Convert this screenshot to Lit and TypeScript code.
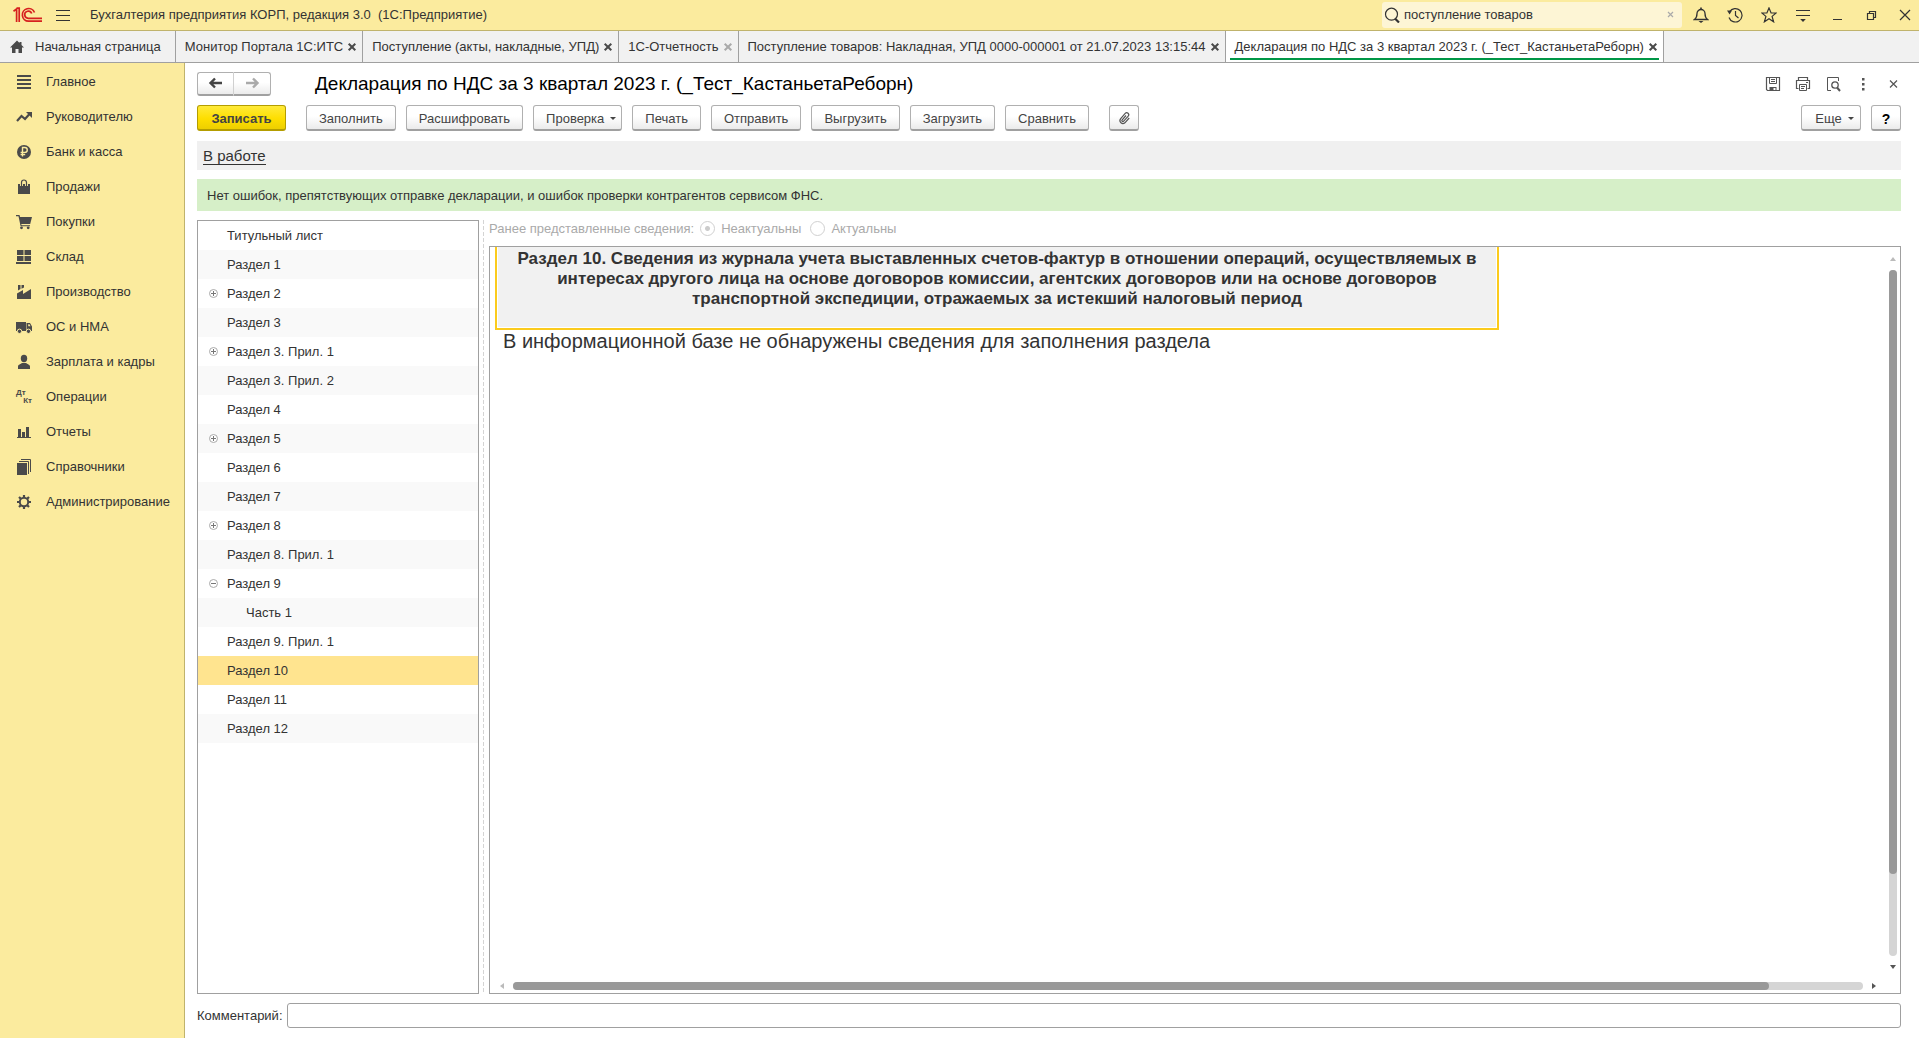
import { LitElement, html, css, svg } from "lit";
import { customElement, property } from "lit/decorators.js";
import { classMap } from "lit/directives/class-map.js";

const shapes: Record<string, unknown> = {
  main: svg`<path d="M1 2h14M1 6h14M1 10h14M1 14h14" fill="none" stroke="currentColor" stroke-width="2"/>`,
  manager: svg`<path d="M1 12 5.500 7 9 10 13.500 5" fill="none" stroke="currentColor" stroke-width="2.2"/><path d="M10 3h6v6z" fill="currentColor"/>`,
  bank: svg`<circle cx="8" cy="8" r="7" fill="currentColor"/><path d="M6.500 12.500v-9h2.300a2.400 2.400 0 0 1 0 4.900H4.600M4.600 10.500h4.600" fill="none" stroke="#fbeb9e" stroke-width="1.4"/>`,
  sales: svg`<path d="M2 5h12v10H2z" fill="currentColor"/><path d="M5.500 7V3.500a2.500 2.500 0 0 1 5 0V7" fill="none" stroke="#fbeb9e" stroke-width="3"/><path d="M5.500 7V3.500a2.500 2.500 0 0 1 5 0V7" fill="none" stroke="currentColor" stroke-width="1.2"/>`,
  purchases: svg`<path d="M0 1h3.500l.6 2H16l-1.800 7H5.200l.4 1.200H14v1H4.600L2.500 2.300H0z" fill="currentColor"/><circle cx="5.5" cy="13.8" r="1.4" fill="currentColor"/><circle cx="12.2" cy="13.8" r="1.4" fill="currentColor"/>`,
  stock: svg`<path d="M1 1h6.500v5H1zM8.500 1H15v5H8.500zM1 7h6.500v5H1zM8.500 7H15v5H8.500zM0 13h15v2H0z" fill="currentColor"/>`,
  production: svg`<path d="M1 15V9.500L7 6v4l8-5v10zM2 1h2.500v4L2 6.500zM5.500 1H8v2.500L5.500 4.800z" fill="currentColor"/>`,
  assets: svg`<path d="M0 3h10v9H0zM10.500 4H14l2 3.500V12h-5.500z" fill="currentColor"/><path d="M12.200 5.300h1.300l1 2h-2.300z" fill="#fbeb9e"/><circle cx="3.5" cy="12.3" r="2.2" fill="currentColor" stroke="#fbeb9e"/><circle cx="12.5" cy="12.3" r="2.2" fill="currentColor" stroke="#fbeb9e"/>`,
  salary: svg`<ellipse cx="8" cy="4.5" rx="3.2" ry="3.7" fill="currentColor"/><path d="M2 15v-2.500C2 10.500 5 10 6 9h4c1 1 4 1.500 4 3.500V15z" fill="currentColor"/>`,
  reports: svg`<path d="M1 13h14v1H1zM2 5h3v8H2zM6 8h3v5H6zM10 3h3v10h-3z" fill="currentColor"/>`,
  catalogs: svg`<path d="M1 4h10v12H1z" fill="currentColor"/><path d="M3 2.500h9.500V15M5 .5h9.500V13" fill="none" stroke="currentColor"/>`,
  admin: svg`<circle cx="8" cy="8" r="4.2" fill="none" stroke="currentColor" stroke-width="2"/><path d="M8 1v2.500M8 12.500V15M1 8h2.500M12.500 8H15M3 3l1.800 1.800M11.200 11.200 13 13M13 3l-1.800 1.800M4.800 11.200 3 13" stroke="currentColor" stroke-width="2.2"/>`,
  home: svg`<path d="M8 1.500 1 8.500h2V14h3.500v-4h3v4H13V8.500h2L12.500 6V3h-2v1z" fill="currentColor"/>`,
  burger: svg`<path d="M1 3.500h14M1 8.500h14M1 13.500h14" fill="none" stroke="currentColor"/>`,
  search: svg`<circle cx="7.5" cy="7.2" r="6" fill="none" stroke="currentColor" stroke-width="1.2"/><path d="M11 11.500 15 15.500" stroke="currentColor" stroke-width="2.2"/>`,
  bell: svg`<path d="M1.500 12.500c2-1.500 2.500-3 2.500-6A4 4 0 0 1 8 2.500a4 4 0 0 1 4 4c0 3 .5 4.500 2.500 6z" fill="none" stroke="currentColor" stroke-width="1.3"/><path d="M8 .5v2" stroke="currentColor" stroke-width="1.6"/><path d="M5.500 14h5L8 16z" fill="currentColor"/>`,
  history: svg`<path d="M2.600 4.800A6.700 6.700 0 1 1 2 10.500" fill="none" stroke="currentColor" stroke-width="1.2"/><path d="M0 3.500h5L2.600 7.500z" fill="currentColor"/><path d="M8.500 4v4.500l3 2.500" fill="none" stroke="currentColor" stroke-width="1.2"/>`,
  star: svg`<path d="M8 .9 10.100 6h5.100l-4.100 3.400 1.500 5.400L8 11.700l-4.600 3.100 1.500-5.400L.8 6h5.100z" fill="none" stroke="currentColor" stroke-width="1.2"/>`,
  service: svg`<path d="M1 3.500h14M1 8.500h14" stroke="currentColor"/><path d="M5.200 12h5.600L8 15z" fill="currentColor"/>`,
  minimize: svg`<path d="M4 12.500h9" stroke="currentColor"/>`,
  restore: svg`<path d="M4.500 6.500h6v6h-6zM6.500 6.500v-2h6v6h-2" fill="none" stroke="currentColor" stroke-width="1.2"/>`,
  close: svg`<path d="M3 3l10 10M13 3 3 13" stroke="currentColor" stroke-width="1.2"/>`,
  closeSmall: svg`<path d="M5 4.500l7 7M12 4.500l-7 7" stroke="currentColor" stroke-width="1.2"/>`,
  closeTiny: svg`<path d="M6 5l5 5M11 5l-5 5" stroke="currentColor" stroke-width="1.2"/>`,
  closeTab: svg`<path d="M4.700 4.700l6.600 6.600M11.300 4.700l-6.600 6.600" stroke="currentColor" stroke-width="2"/>`,
  save: svg`<path d="M1.500 1.500h13v13h-12l-1-1z" fill="none" stroke="currentColor" stroke-width="1.2"/><path d="M4.500 1.500v6h7v-6M6 3.500h4M6 5.500h4" fill="none" stroke="currentColor"/><path d="M4.500 15v-4h7v4h-1v-3h-2v3z" fill="currentColor"/>`,
  print: svg`<path d="M3.500 4.500v-3h9v3M3.500 12.500h-2v-8h13v8h-2" fill="none" stroke="currentColor" stroke-width="1.2"/><path d="M4.500 8.500h7v6h-7zM6 10.500h4M6 12.500h3" fill="none" stroke="currentColor"/><path d="M11 6.500h2" stroke="currentColor"/>`,
  preview: svg`<path d="M6 14.500H2.500v-13h11V5" fill="none" stroke="currentColor"/><circle cx="10" cy="9" r="3.2" fill="none" stroke="currentColor" stroke-width="1.3"/><path d="M12 11.500l3 3.500" stroke="currentColor" stroke-width="2"/>`,
  dots: svg`<path d="M7 2h2.500v2.500H7zM7 7h2.500v2.500H7zM7 12h2.500v2.500H7z" fill="currentColor"/>`,
  back: svg`<path d="M7 3.500 2.500 8 7 12.500M3 8h11" fill="none" stroke="currentColor" stroke-width="2.4"/>`,
  forward: svg`<path d="M9 3.500 13.500 8 9 12.500M13 8H2" fill="none" stroke="currentColor" stroke-width="2.4"/>`,
  clip: svg`<path d="M10 5.500 6 10a1 1 0 0 0 1.500 1.300l4.700-5.200a2 2 0 0 0-3-2.700L4.500 8.800a3 3 0 0 0 4.400 4l4.300-4.800" fill="none" stroke="currentColor" stroke-width="1.2"/>`,
  plus: svg`<circle cx="8.5" cy="7.5" r="4" fill="#fff" stroke="#aaa"/><path d="M6 7.500h5M8.500 5v5" stroke="#777"/>`,
  minus: svg`<circle cx="8.5" cy="7.5" r="4" fill="#fff" stroke="#aaa"/><path d="M6 7.500h5" stroke="#777"/>`,
};

@customElement("app-icon")
export class AppIcon extends LitElement {
  @property() name = "";
  static styles = css`
    :host { display: inline-flex; flex: none; }
    .glyph { display: block; width: 16px; height: 16px; }
  `;
  render() {
    return html`<svg class="glyph" viewBox="0 0 16 16" aria-hidden="true">${shapes[this.name]}</svg>`;
  }
}

const sections = [
  ["main", "Главное"], ["manager", "Руководителю"], ["bank", "Банк и касса"], ["sales", "Продажи"],
  ["purchases", "Покупки"], ["stock", "Склад"], ["production", "Производство"], ["assets", "ОС и НМА"],
  ["salary", "Зарплата и кадры"], ["operations", "Операции"], ["reports", "Отчеты"],
  ["catalogs", "Справочники"], ["admin", "Администрирование"],
];

const tabs = [
  { text: "Монитор Портала 1С:ИТС" },
  { text: "Поступление (акты, накладные, УПД)" },
  { text: "1С-Отчетность", dim: true },
  { text: "Поступление товаров: Накладная, УПД 0000-000001 от 21.07.2023 13:15:44" },
  { text: "Декларация по НДС за 3 квартал 2023 г. (_Тест_КастаньетаРеборн)", active: true },
];

const tree: { text: string; fold?: string; child?: boolean; selected?: boolean }[] = [
  { text: "Титульный лист" }, { text: "Раздел 1" }, { text: "Раздел 2", fold: "plus" }, { text: "Раздел 3" },
  { text: "Раздел 3. Прил. 1", fold: "plus" }, { text: "Раздел 3. Прил. 2" }, { text: "Раздел 4" },
  { text: "Раздел 5", fold: "plus" }, { text: "Раздел 6" }, { text: "Раздел 7" }, { text: "Раздел 8", fold: "plus" },
  { text: "Раздел 8. Прил. 1" }, { text: "Раздел 9", fold: "minus" }, { text: "Часть 1", child: true },
  { text: "Раздел 9. Прил. 1" }, { text: "Раздел 10", selected: true }, { text: "Раздел 11" }, { text: "Раздел 12" },
];

@customElement("app-root")
export class AppRoot extends LitElement {
  static styles = css`
    :host {
      display: flex; flex-direction: column; height: 100vh; overflow: hidden;
      background: #fff; color: #333; font: 13px/16px "Liberation Sans", Arial, sans-serif;
    }
    * { box-sizing: border-box; }
    button, input { font: inherit; color: inherit; margin: 0; }
    button { white-space: nowrap; cursor: pointer; }
    a { color: inherit; text-decoration: none; }
    .plain { display: inline-flex; align-items: center; justify-content: center; padding: 0; border: 0; background: none; }

    .titlebar { display: flex; align-items: center; height: 31px; flex: none; padding: 0 6px 0 13px; background: #fbeb9e; border-bottom: 1px solid #c0b36c; }
    .logo { width: 30px; height: 16px; margin-right: 12px; }
    .apptitle { margin-left: 19px; flex: 1; white-space: pre; }
    .search { display: flex; align-items: center; width: 300px; height: 26px; padding: 0 4px 0 2px; margin-right: 11px; gap: 4px; background: #fdf5d5; border-radius: 3px; }
    .search input { flex: 1; min-width: 0; border: 0; padding: 0; background: none; outline: none; }
    .search .plain { color: #aaa; }
    .syscmds { display: flex; gap: 18px; }

    .tabs { display: flex; height: 32px; flex: none; background: #f1f1f1; border-bottom: 1px solid #a0a0a0; }
    .tab { display: flex; align-items: center; gap: 1px; padding: 0 2px 0 9px; border-right: 1px solid #a0a0a0; }
    .tab.home { padding: 0 14px 0 9px; }
    .tab.home .plain { gap: 10px; }
    .tab.home app-icon, .tab .x { color: #4a4a4a; }
    .tab .x.dim { color: #aaa; }
    .tab.active { background: linear-gradient(#009646, #009646) center 27px / calc(100% - 8px) 2px no-repeat #fff; }

    .body { display: flex; flex: 1; min-height: 0; }
    .sidebar { width: 185px; flex: none; padding-top: 1px; background: #fbeb9e; border-right: 1px solid #c0b36c; }
    .section { display: flex; align-items: center; height: 35px; gap: 14px; padding-left: 16px; }
    .section app-icon { color: #4a4a4a; }
    .dtkt { display: flex; flex-direction: column; width: 16px; font-size: 8px; line-height: 8px; font-weight: bold; color: #4a4a4a; }
    .dtkt .kt { align-self: flex-end; }

    .form { display: flex; flex-direction: column; flex: 1; min-width: 0; padding: 8px 18px 10px 12px; }
    .head { display: flex; align-items: center; height: 25px; flex: none; }
    .history { display: flex; }
    .btn { display: inline-flex; align-items: center; justify-content: center; height: 26px; padding: 2px 12px 0; border: 1px solid #b0b0b0; border-bottom: 2px solid #a0a0a0; border-radius: 3px; background: linear-gradient(#fff 45%, #ebebeb); color: #444; }
    .history .btn { width: 37px; height: 24px; padding: 0; }
    .history .btn:first-child { border-radius: 3px 0 0 3px; border-right-color: #d0d0d0; }
    .history .btn:last-child { border-radius: 0 3px 3px 0; border-left: 0; color: #aaa; }
    h1 { margin: 0 0 0 44px; flex: 1; font-size: 19px; line-height: 24px; font-weight: normal; color: #000; }
    .formcmds { display: flex; gap: 14px; color: #555; }
    .toolbar { display: flex; gap: 10px; margin-top: 9px; flex: none; }
    .btn.primary { min-width: 89px; font-weight: bold; background: linear-gradient(#ffea3a, #fede00 55%, #edcf00); border-color: #b49d00; margin-right: 10px; }
    .btn.square { width: 30px; padding: 0; }
    .btn.clip { margin-left: 10px; color: #555; }
    .btn.menu { min-width: 60px; padding-right: 5px; }
    .btn.menu::after { content: ""; margin-left: 6px; border: 3px solid transparent; border-top-color: #444; border-bottom: 0; }
    .btn.help { color: #000; font-weight: bold; font-size: 14px; padding-top: 2px; }
    .spacer { flex: 1; }

    .status { display: flex; align-items: center; height: 29px; margin-top: 10px; padding-left: 6px; flex: none; background: #f0f0f0; font-size: 15px; }
    .status a { border-bottom: 1px solid #333; line-height: 17px; }
    .notice { display: flex; align-items: center; height: 32px; margin-top: 9px; padding: 2px 10px 0; flex: none; background: #d6efc8; }

    .work { display: flex; flex: 1; min-height: 0; margin-top: 9px; }
    .tree { width: 282px; flex: none; margin: 0; padding: 0; list-style: none; border: 1px solid #a0a0a0; }
    .row { display: flex; align-items: center; height: 29px; padding-left: 7px; gap: 6px; }
    .row:nth-child(even) { background: #f9f9f9; }
    .row.selected { background: #ffe48f; }
    .row .fold { width: 16px; height: 16px; }
    .row.child { padding-left: 26px; }
    .row .label { text-align: left; flex: 1; justify-content: flex-start; }
    .split { width: 1px; margin: 0 5px 0 4px; flex: none; background: repeating-linear-gradient(#d4d4d4 0 4px, transparent 4px 6px); }
    .pane { display: flex; flex-direction: column; flex: 1; min-width: 0; }
    .actual { display: flex; align-items: center; height: 26px; padding-bottom: 9px; flex: none; color: #aaa; }
    .actual label { display: flex; align-items: center; gap: 6px; margin-left: 6px; }
    .actual label + label { margin-left: 9px; }
    .actual input { appearance: none; width: 15px; height: 15px; border: 1px solid #d0d0d0; border-radius: 50%; background: #fff; }
    .actual input:checked { background: radial-gradient(#ccc 2px, #fff 3px); }

    .sheet { display: grid; grid-template: minmax(0, 1fr) 14px / minmax(0, 1fr) 14px; flex: 1; min-height: 0; border: 1px solid #a0a0a0; }
    .cells { overflow: hidden; padding-left: 5px; }
    .caption { width: 1004px; height: 83px; padding: 0 1px 1px; border: 2px solid #fbcb1d; border-top: 0; background: #f1f1f1 content-box; text-align: center; }
    .caption h2 { margin: 0; padding: 2px 16px 0; font-size: 17px; line-height: 20px; }
    .message { margin: 0; padding-left: 8px; font-size: 20px; line-height: 22px; }
    .scroll { display: flex; align-items: center; gap: 9px; }
    .scroll.v { flex-direction: column; padding: 10px 0; }
    .scroll.h { padding: 0 10px; }
    .track { flex: 1; background: #d5d5d5; border-radius: 4px; }
    .v .track { width: 8px; }
    .h .track { height: 8px; }
    .thumb { background: #999; border-radius: 4px; }
    .v .thumb { width: 8px; height: 88%; }
    .h .thumb { height: 8px; width: 93%; }
    .arrow { border: 3px solid transparent; }
    .arrow.up { border-top: 0; border-bottom: 4px solid #bbb; }
    .arrow.down { border-bottom: 0; border-top: 4px solid #555; }
    .arrow.left { border-left: 0; border-right: 4px solid #bbb; }
    .arrow.right { border-right: 0; border-left: 4px solid #555; }

    .comment { display: flex; align-items: center; gap: 4px; margin-top: 9px; flex: none; }
    .comment input { flex: 1; height: 25px; border: 1px solid #a0a0a0; border-radius: 3px; padding: 0 5px; }
  `;

  private sys(name: string, label: string) {
    return html`<button class="plain" aria-label=${label}><app-icon name=${name}></app-icon></button>`;
  }

  private btn(text: string, kind = "") {
    return html`<button class="btn ${kind}">${text}</button>`;
  }

  render() {
    return html`
      <header class="titlebar">
        <svg class="logo" viewBox="0 0 30 16" role="img" aria-label="1С">
          <g fill="none" stroke="#d6201f" stroke-width="1.7">
            <path d="M.5 4.200 3.600 2v13M6.200 15V1.200H3.500" />
            <path d="M21.500 5.500A6.300 6.300 0 1 0 15.500 14.200H29" />
            <path d="M18.700 6.500A3.600 3.600 0 1 0 15.500 11.300H29" />
          </g>
        </svg>
        ${this.sys("burger", "Главное меню")}
        <div class="apptitle">Бухгалтерия предприятия КОРП, редакция 3.0  (1С:Предприятие)</div>
        <div class="search">
          <app-icon name="search"></app-icon>
          <input type="text" aria-label="Поиск" .value=${"поступление товаров"} />
          ${this.sys("closeTiny", "Очистить")}
        </div>
        <div class="syscmds">
          ${this.sys("bell", "Уведомления")} ${this.sys("history", "История")} ${this.sys("star", "Избранное")}
          ${this.sys("service", "Сервис")} ${this.sys("minimize", "Свернуть")} ${this.sys("restore", "Восстановить")}
          ${this.sys("close", "Закрыть")}
        </div>
      </header>
      <nav class="tabs">
        <div class="tab home"><button class="plain"><app-icon name="home"></app-icon>Начальная страница</button></div>
        ${tabs.map((t) => html`
          <div class=${classMap({ tab: true, active: !!t.active })}>
            <button class="plain">${t.text}</button>
            <button class=${classMap({ plain: true, x: true, dim: !!t.dim })} aria-label="Закрыть"><app-icon name="closeTab"></app-icon></button>
          </div>`)}
      </nav>
      <div class="body">
        <nav class="sidebar">
          ${sections.map(([icon, text]) => html`
            <a class="section" href="#${icon}">
              ${icon === "operations"
                ? html`<span class="dtkt"><span>Дт</span><span class="kt">Кт</span></span>`
                : html`<app-icon name=${icon}></app-icon>`}
              ${text}
            </a>`)}
        </nav>
        <main class="form">
          <div class="head">
            <div class="history">
              <button class="btn" aria-label="Назад"><app-icon name="back"></app-icon></button>
              <button class="btn" aria-label="Вперед"><app-icon name="forward"></app-icon></button>
            </div>
            <h1>Декларация по НДС за 3 квартал 2023 г. (_Тест_КастаньетаРеборн)</h1>
            <div class="formcmds">
              ${this.sys("save", "Сохранить")} ${this.sys("print", "Печать")} ${this.sys("preview", "Просмотр")}
              ${this.sys("dots", "Еще")} ${this.sys("closeSmall", "Закрыть")}
            </div>
          </div>
          <div class="toolbar">
            ${this.btn("Записать", "primary")} ${this.btn("Заполнить")} ${this.btn("Расшифровать")}
            ${this.btn("Проверка", "menu")} ${this.btn("Печать")} ${this.btn("Отправить")}
            ${this.btn("Выгрузить")} ${this.btn("Загрузить")} ${this.btn("Сравнить")}
            <button class="btn square clip" aria-label="Файлы"><app-icon name="clip"></app-icon></button>
            <span class="spacer"></span>
            ${this.btn("Еще", "menu")} ${this.btn("?", "square help")}
          </div>
          <div class="status"><a href="#status">В работе</a></div>
          <div class="notice">Нет ошибок, препятствующих отправке декларации, и ошибок проверки контрагентов сервисом ФНС.</div>
          <div class="work">
            <ul class="tree">
              ${tree.map((r) => html`
                <li class=${classMap({ row: true, child: !!r.child, selected: !!r.selected })}>
                  ${r.fold
                    ? html`<button class="plain fold" aria-label="Раскрыть или свернуть"><app-icon name=${r.fold}></app-icon></button>`
                    : html`<span class="fold"></span>`}
                  <button class="plain label">${r.text}</button>
                </li>`)}
            </ul>
            <div class="split"></div>
            <section class="pane">
              <div class="actual" role="radiogroup" aria-labelledby="actual">
                <span id="actual">Ранее представленные сведения:</span>
                <label><input type="radio" name="actual" disabled checked />Неактуальны</label>
                <label><input type="radio" name="actual" disabled />Актуальны</label>
              </div>
              <div class="sheet">
                <div class="cells">
                  <div class="caption"><h2>Раздел 10. Сведения из журнала учета выставленных счетов-фактур в отношении операций, осуществляемых в интересах другого лица на основе договоров комиссии, агентских договоров или на основе договоров транспортной экспедиции, отражаемых за истекший налоговый период</h2></div>
                  <p class="message">В информационной базе не обнаружены сведения для заполнения раздела</p>
                </div>
                <div class="scroll v"><span class="arrow up"></span><div class="track"><div class="thumb"></div></div><span class="arrow down"></span></div>
                <div class="scroll h"><span class="arrow left"></span><div class="track"><div class="thumb"></div></div><span class="arrow right"></span></div>
              </div>
            </section>
          </div>
          <div class="comment"><label for="comment">Комментарий:</label><input id="comment" type="text" /></div>
        </main>
      </div>
    `;
  }
}
